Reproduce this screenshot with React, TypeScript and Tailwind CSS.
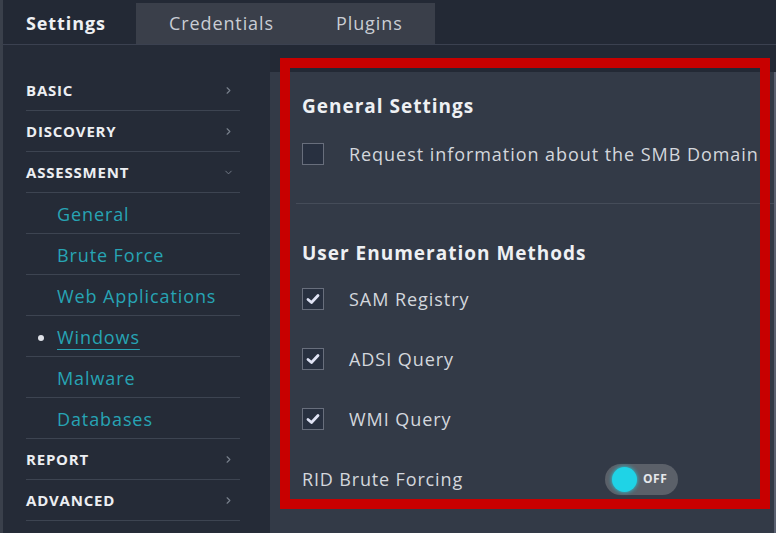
import { ChevronRight, ChevronDown } from 'lucide-react';

const font = { fontFamily: '"Open Sans", "Noto Sans", sans-serif' };

interface NavRow {
  label: string;
  sub?: boolean;
  open?: boolean;
  active?: boolean;
}

const NAV: NavRow[] = [
  { label: 'BASIC' },
  { label: 'DISCOVERY' },
  { label: 'ASSESSMENT', open: true },
  { label: 'General', sub: true },
  { label: 'Brute Force', sub: true },
  { label: 'Web Applications', sub: true },
  { label: 'Windows', sub: true, active: true },
  { label: 'Malware', sub: true },
  { label: 'Databases', sub: true },
  { label: 'REPORT' },
  { label: 'ADVANCED' },
];

function CheckBox({ checked }: { checked?: boolean }) {
  return (
    <div className="w-[22px] h-[22px] border border-[#686e7c] bg-[#283040] flex items-center justify-center shrink-0">
      {checked && (
        <svg width="14" height="12" viewBox="0 0 14 12">
          <path d="M2 6.5 L5.5 9.5 L12 2.5" fill="none" stroke="#dfe2f4" strokeWidth="2.8" strokeLinecap="round" strokeLinejoin="round" />
        </svg>
      )}
    </div>
  );
}

function CheckRow({ label, checked }: { label: string; checked?: boolean }) {
  return (
    <div className="flex items-center h-[24px] gap-[25px]">
      <CheckBox checked={checked} />
      <span className="text-[18px] tracking-[0.95px] text-[#d3d7dd]">{label}</span>
    </div>
  );
}

export default function App() {
  return (
    <div className="w-[776px] h-[539px] bg-white" style={font}>
      <div className="relative h-[533px] bg-[#232935] border-l-[3px] border-[#3a404b] flex flex-col">
        {/* Tabs */}
        <div className="h-[45px] flex items-stretch pt-[3px] border-b border-[#3b4150]">
          <div className="w-[133px] flex items-center pl-[23px] text-[18px] tracking-[0.9px] font-bold text-[#eef0f3]">Settings</div>
          <div className="flex bg-[#3a3f4a]">
            <div className="w-[164px] flex items-center pl-[33px] text-[18px] tracking-[0.9px] text-[#c9cdd4]">Credentials</div>
            <div className="w-[135px] flex items-center pl-[36px] text-[18px] tracking-[0.9px] text-[#c9cdd4]">Plugins</div>
          </div>
        </div>

        <div className="flex flex-1">
          {/* Sidebar */}
          <div className="w-[267px] bg-[#252b37] pt-[25px] pl-[23px]">
            <div className="w-[214px]">
              {NAV.map(row => (
                <div key={row.label} className="h-[41px] border-b border-[#3d4451] flex items-center justify-between pr-[6px]">
                  {row.sub ? (
                    <div className="flex items-center pl-[12px] pt-[3px]">
                      <span className={`w-[6px] h-[6px] rounded-full mr-[13px] ${row.active ? 'bg-[#dfe2e8]' : 'bg-transparent'}`} />
                      <span className={`text-[18px] tracking-[0.9px] text-[#27a4b4] ${row.active ? 'underline underline-offset-[5px] decoration-[#27a4b4]' : ''}`}>
                        {row.label}
                      </span>
                    </div>
                  ) : (
                    <>
                      <span className="text-[15px] font-bold text-[#eceef2] tracking-[0.8px]">{row.label}</span>
                      {row.open ? (
                        <ChevronDown size={11} strokeWidth={2} className="text-[#78808c]" />
                      ) : (
                        <ChevronRight size={11} strokeWidth={2.5} className="text-[#78808c]" />
                      )}
                    </>
                  )}
                </div>
              ))}
            </div>
          </div>

          {/* Settings panel */}
          <div className="flex-1 mt-[27px] bg-[#333a47] border-r-[2px] border-[#5a6070] pl-[26px] pt-[22px]">
            <div className="px-[6px]">
              <div className="h-[24px] flex items-center text-[19px] tracking-[1px] font-bold text-[#eef0f3]">General Settings</div>
              <div className="mt-[24px]">
                <CheckRow label="Request information about the SMB Domain" />
              </div>
            </div>
            <div className="mt-[37px] border-t border-[#454c59]" />
            <div className="px-[6px] pt-[37px]">
              <div className="h-[24px] flex items-center text-[19px] tracking-[1px] font-bold text-[#eef0f3]">User Enumeration Methods</div>
              <div className="mt-[22px] flex flex-col gap-[36px]">
                <CheckRow label="SAM Registry" checked />
                <CheckRow label="ADSI Query" checked />
                <CheckRow label="WMI Query" checked />
              </div>
              <div className="mt-[33px] flex items-center h-[30px]">
                <span className="w-[303px] text-[18px] tracking-[0.85px] text-[#d3d7dd]">RID Brute Forcing</span>
                <div className="w-[73px] h-[31px] rounded-full bg-[#5b6069] flex items-center pl-[7px] gap-[6px]">
                  <span className="w-[25px] h-[25px] rounded-full bg-[#1fd3e6] shadow-[0_0_4px_#1fd3e6]" />
                  <span className="text-[12px] tracking-[0.5px] font-bold text-[#e6e8ec]">OFF</span>
                </div>
              </div>
            </div>
          </div>
        </div>

        {/* Annotation frame */}
        <div className="absolute left-[277px] top-[58px] w-[490px] h-[451px] border-[10px] border-[#c80000] pointer-events-none" />
      </div>
    </div>
  );
}
